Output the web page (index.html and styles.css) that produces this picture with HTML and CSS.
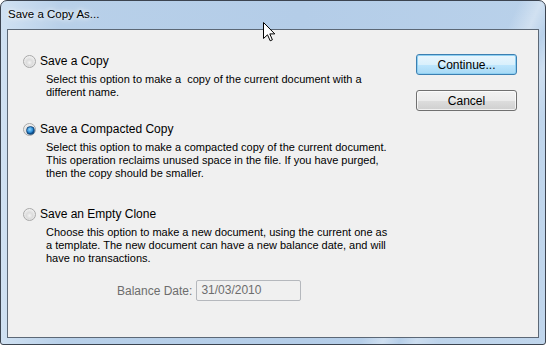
FILE: index.html
```html
<!DOCTYPE html>
<html>
<head>
	<title>Save a Copy As...</title>
	<link rel="stylesheet" href="styles.css">
</head>
<body>
	<div class="window">
		<div class="titlebar">
			<span class="title">Save a Copy As...</span>
		</div>
		<div class="client">
			<div class="options">
				<div class="option first">
					<label class="choice"><span class="radio"></span>Save a Copy</label>
					<p class="desc">Select this option to make a&nbsp; copy of the current document with a<br>different name.</p>
				</div>
				<div class="option second">
					<label class="choice"><span class="radio checked"></span>Save a Compacted Copy</label>
					<p class="desc">Select this option to make a compacted copy of the current document.<br>This operation reclaims unused space in the file. If you have purged,<br>then the copy should be smaller.</p>
				</div>
				<div class="option third">
					<label class="choice"><span class="radio"></span>Save an Empty Clone</label>
					<p class="desc">Choose this option to make a new document, using the current one as<br>a template. The new document can have a new balance date, and will<br>have no transactions.</p>
				</div>
				<div class="balance">
					<span class="balance-label">Balance Date:</span>
					<span class="field">31/03/2010</span>
				</div>
			</div>
			<div class="buttons">
				<button class="btn default">Continue...</button>
				<button class="btn">Cancel</button>
			</div>
		</div>
		<svg class="cursor" width="13" height="20" viewBox="0 0 13 20">
			<path d="M0.5 0.5 L0.5 16.5 L4.5 12.8 L7.2 18.8 L9.4 17.8 L6.8 11.9 L11.8 11.9 Z" fill="#fff" stroke="#000" stroke-width="1" stroke-linejoin="miter"/>
		</svg>
	</div>
</body>
</html>
```

FILE: styles.css
```css
* {
	padding: 0px;
	margin: 0px;
	box-sizing: border-box;
}

body {
	background: #ffffff;
	font-family: "Liberation Sans", Arial, sans-serif;
	font-size: 11px;
	color: #000;
}

.window {
	position: relative;
	width: 546px;
	height: 345px;
	border: 1px solid #3c4450;
	border-radius: 7px 7px 3px 3px;
	padding: 0 6px 6px 6px;
	display: flex;
	flex-direction: column;
	background:
		linear-gradient(115deg, rgba(255,255,255,0) 0px, rgba(255,255,255,0) 470px, rgba(255,255,255,0.35) 490px, rgba(255,255,255,0) 505px, rgba(255,255,255,0.3) 520px, rgba(255,255,255,0.1) 540px),
		linear-gradient(90deg, #d0e1f2 0px, #b8d0e9 60px, #b4cde8 300px, #b9d1ea 546px);
	overflow: hidden;
}

.titlebar {
	height: 28px;
	display: flex;
	align-items: center;
	padding-left: 1px;
}

.title {
	font-size: 11.5px;
	color: #000;
	text-shadow: 0 0 8px #fff, 0 0 4px #fff;
	padding-bottom: 2px;
}

.client {
	flex: 1;
	border: 1px solid #5c6876;
	background: #f0f0f0;
	display: flex;
	justify-content: space-between;
}

.options {
	padding: 24px 0 0 15px;
}

.choice {
	display: flex;
	align-items: center;
	height: 15px;
	line-height: 15px;
	font-size: 12px;
}

.radio {
	width: 13px;
	height: 13px;
	border-radius: 50%;
	border: 1px solid #a8a8a8;
	background: radial-gradient(circle at 50% 60%, #f4f4f4 0px, #dcdcdc 3px, #e8e8e8 5px, #f6f6f6 7px);
	margin-right: 4px;
	position: relative;
}

.radio.checked::after {
	content: "";
	position: absolute;
	left: 2px;
	top: 2px;
	width: 7px;
	height: 7px;
	border-radius: 50%;
	background: radial-gradient(circle at 40% 35%, #8fd6ff 0px, #2a8ad4 3px, #0d4f8c 4px);
	border: 1px solid #1c4e7f;
}

.desc {
	margin: 4px 0 0 23px;
	line-height: 13px;
	font-size: 11px;
}

.option.second {
	margin-top: 23px;
}

.option.third {
	margin-top: 27px;
}

.balance {
	margin: 15px 0 0 94px;
	display: flex;
	align-items: center;
	gap: 4px;
	color: #6d6d6d;
	font-size: 12px;
}

.field {
	width: 105px;
	height: 21px;
	border: 1px solid #b5b8bd;
	border-radius: 2px;
	padding-left: 4px;
	line-height: 19px;
	color: #6d6d6d;
	background: #f0f0f0;
}

.buttons {
	padding: 24px 21px 0 0;
	display: flex;
	flex-direction: column;
	gap: 15px;
}

.btn {
	width: 101px;
	height: 21px;
	border: 1px solid #707070;
	border-radius: 3px;
	font-family: "Liberation Sans", Arial, sans-serif;
	font-size: 12px;
	color: #000;
	background: linear-gradient(#f2f2f2 0%, #ebebeb 50%, #dddddd 51%, #cfcfcf 100%);
	box-shadow: inset 0 0 0 1px rgba(255,255,255,0.7);
}

.btn.default {
	border-color: #3c7fb1;
	background: linear-gradient(#eaf6fd 0%, #d9f0fc 50%, #bee6fd 51%, #a7d9f5 100%);
	box-shadow: inset 0 0 0 1px #8fd0f2;
}

.cursor {
	position: absolute;
	left: 262px;
	top: 21px;
}
```
